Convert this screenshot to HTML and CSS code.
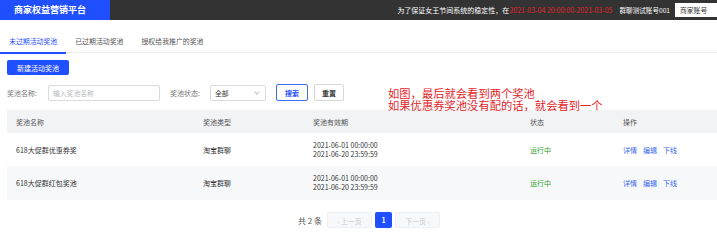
FILE: index.html
```html
<!DOCTYPE html>
<html lang="zh-CN">
<head>
  <meta charset="UTF-8">
  <title>商家权益营销平台</title>
  <link rel="stylesheet" href="styles.css">
</head>
<body>
  <div class="topbar">
    <div class="brand">商家权益营销平台</div>
    <div class="notice">
      <span>为了保证女王节间系统的稳定性，在<em>2021-03-04 20:00:00-2021-03-05</em></span>
      <span class="account">群聊测试账号001</span>
      <span class="switch">商家账号</span>
    </div>
  </div>

  <div class="tabs">
    <div class="tab active">未过期活动奖池</div>
    <div class="tab">已过期活动奖池</div>
    <div class="tab">授权给我推广的奖池</div>
  </div>

  <div class="content">
    <button class="btn-primary">新建活动奖池</button>

    <div class="filters">
      <label>奖池名称:</label>
      <input type="text" class="field name-field" placeholder="输入奖池名称">
      <label class="status-label">奖池状态:</label>
      <div class="field select">全部<span class="chevron"></span></div>
      <button class="btn-outline">搜索</button>
      <button class="btn-plain">重置</button>
    </div>

    <div class="note">如图，最后就会看到两个奖池<br>如果优惠券奖池没有配的话，就会看到一个</div>

    <div class="table">
      <div class="row head">
        <div>奖池名称</div><div>奖池类型</div><div>奖池有效期</div><div>状态</div><div>操作</div>
      </div>
      <div class="row">
        <div>618大促群优惠券奖</div>
        <div>淘宝群聊</div>
        <div class="dates">2021-06-01 00:00:00<br>2021-06-20 23:59:59</div>
        <div class="running">运行中</div>
        <div class="ops"><a>详情</a><a>编辑</a><a>下线</a></div>
      </div>
      <div class="row alt">
        <div>618大促群红包奖池</div>
        <div>淘宝群聊</div>
        <div class="dates">2021-06-01 00:00:00<br>2021-06-20 23:59:59</div>
        <div class="running">运行中</div>
        <div class="ops"><a>详情</a><a>编辑</a><a>下线</a></div>
      </div>
    </div>

    <div class="pager">
      <span class="total">共 2 条</span>
      <span class="page-btn">&lsaquo; 上一页</span>
      <span class="page-num">1</span>
      <span class="page-btn">下一页 &rsaquo;</span>
    </div>
  </div>
</body>
</html>
```

FILE: styles.css
```css
body { margin: 0; background: #fff; font-family: "Noto Sans CJK SC", "Noto Sans", sans-serif; font-size: 7px; color: #333; }

.topbar { display: flex; height: 20px; }
.brand { width: 110px; background: #1f4fff; color: #fff; font-size: 9px; font-weight: bold; line-height: 20px; padding-left: 14px; box-sizing: border-box; }
.notice { flex: 1; background: #333; color: #fff; display: flex; align-items: center; justify-content: flex-end; font-size: 7px; }
.notice em { font-style: normal; color: #e0262a; }
.account { margin-left: 7px; font-size: 6.6px; }
.switch { margin-left: 5px; background: #fff; color: #333; height: 14px; line-height: 14px; width: 42px; padding-left: 5px; box-sizing: border-box; font-size: 6.8px; }

.tabs { display: flex; border-bottom: 1px solid #eceef2; height: 32px; }
.tab { padding: 16px 9px 0; line-height: 10px; height: 16px; color: #555; font-size: 6.9px; }
.tab.active { color: #1f4fff; border-bottom: 2px solid #1f4fff; margin-bottom: -1px; }

.content { padding-left: 7px; position: relative; }

.btn-primary { margin-top: 7px; height: 15px; width: 62px; padding: 0; border: none; border-radius: 2px; background: #1f4fff; color: #fff; font-family: inherit; font-size: 7px; }

.filters { display: flex; align-items: center; margin-top: 9px; height: 17px; }
.filters label { color: #777; width: 41px; }
.filters .status-label { margin-left: 10px; width: 40px; }
.field { box-sizing: border-box; height: 16px; border: 1px solid #d9dbe0; border-radius: 2px; font-family: inherit; font-size: 6.8px; padding: 0 4px; }
.name-field { width: 112px; color: #333; }
.name-field::placeholder { color: #b5b8be; }
.select { width: 56px; display: flex; align-items: center; justify-content: space-between; color: #333; }
.chevron { width: 3px; height: 3px; border-right: 1px solid #c4c6cc; border-bottom: 1px solid #c4c6cc; transform: rotate(45deg); margin: -2px 2px 0 0; }
.btn-outline, .btn-plain { height: 17px; box-sizing: border-box; border-radius: 2px; background: #fff; font-family: inherit; font-size: 7px; font-weight: bold; padding: 0; }
.btn-outline { margin-left: 10px; width: 32px; border: 1px solid #3d6cf5; color: #1f4fff; }
.btn-plain { margin-left: 6px; width: 30px; border: 1px solid #d6d8dd; color: #333; }

.note { position: absolute; left: 388px; top: 34px; color: #e3231f; font-size: 11.3px; line-height: 12px; }

.table { margin-top: 9px; }
.row { display: grid; grid-template-columns: 187px 110px 217px 93px 1fr; align-items: center; height: 33px; color: #333; }
.row > div { padding-left: 9px; }
.row.head { height: 23px; background: #f2f3f5; color: #555; }
.row.alt { height: 34px; background: #f7f8fa; }
.dates { line-height: 9px; }
.running { color: #2d9d2d; }
.ops a { color: #3869ee; margin-right: 6px; }

.pager { display: flex; align-items: center; justify-content: center; margin-top: 12px; padding-left: 14px; height: 16px; }
.total { color: #555; font-size: 8px; margin-right: 5px; }
.page-btn { width: 45px; height: 16px; line-height: 16px; text-align: center; border: 1px solid #eef0f3; border-radius: 2px; background: #f7f8fa; color: #c7c9ce; box-sizing: border-box; font-size: 6.8px; }
.page-num { width: 17px; height: 16px; line-height: 16px; text-align: center; background: #1f4fff; color: #fff; border-radius: 2px; margin: 0 3px; font-weight: bold; }
```
